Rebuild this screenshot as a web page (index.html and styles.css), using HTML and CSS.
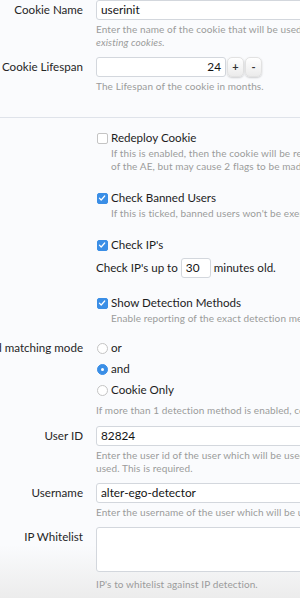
FILE: index.html
```html
<!DOCTYPE html>
<html lang="en">
<head>
<meta charset="utf-8">
<title>Alter Ego Detector options</title>
<link rel="stylesheet" href="styles.css">
</head>
<body>
<div class="form">
  <section class="group first">
    <div class="row text-row">
      <div class="label">Cookie Name</div>
      <div class="field">
        <div class="input wide">userinit</div>
        <p class="explain">Enter the name of the cookie that will be used to track users. Changing<br><i>existing cookies.</i></p>
      </div>
    </div>
    <div class="row text-row">
      <div class="label">Cookie Lifespan</div>
      <div class="field">
        <div class="spin">
          <div class="input num">24</div>
          <button class="spin-btn">+</button>
          <button class="spin-btn">-</button>
        </div>
        <p class="explain">The Lifespan of the cookie in months.</p>
      </div>
    </div>
  </section>

  <section class="group second">
    <div class="row">
      <div class="label"></div>
      <div class="field checks">
        <div class="check-item">
          <label class="check"><span class="box"></span>Redeploy Cookie</label>
          <p class="explain sub">If this is enabled, then the cookie will be reset on every page view, improving the detection<br>of the AE, but may cause 2 flags to be made for the same user pair.</p>
        </div>
        <div class="check-item">
          <label class="check"><span class="box on"><svg viewBox="0 0 10 10" width="10" height="10"><path d="M2.4 5.2 L4.2 7 L7.7 3" fill="none" stroke="#fff" stroke-width="1.2" stroke-linecap="round" stroke-linejoin="round"/></svg></span>Check Banned Users</label>
          <p class="explain sub">If this is ticked, banned users won't be exempt from detection.</p>
        </div>
        <div class="check-item">
          <label class="check"><span class="box on"><svg viewBox="0 0 10 10" width="10" height="10"><path d="M2.4 5.2 L4.2 7 L7.7 3" fill="none" stroke="#fff" stroke-width="1.2" stroke-linecap="round" stroke-linejoin="round"/></svg></span>Check IP's</label>
          <div class="inline-line">Check IP's up to <span class="input mini">30</span> minutes old.</div>
        </div>
        <div class="check-item">
          <label class="check"><span class="box on"><svg viewBox="0 0 10 10" width="10" height="10"><path d="M2.4 5.2 L4.2 7 L7.7 3" fill="none" stroke="#fff" stroke-width="1.2" stroke-linecap="round" stroke-linejoin="round"/></svg></span>Show Detection Methods</label>
          <p class="explain sub">Enable reporting of the exact detection methods used in the report.</p>
        </div>
      </div>
    </div>

    <div class="row radio-row">
      <div class="label">Detection method matching mode</div>
      <div class="field">
        <div class="radios">
          <label class="radio"><span class="dot"></span>or</label>
          <label class="radio"><span class="dot on"></span>and</label>
          <label class="radio"><span class="dot"></span>Cookie Only</label>
        </div>
        <p class="explain">If more than 1 detection method is enabled, configure how they are matched.</p>
      </div>
    </div>

    <div class="row text-row">
      <div class="label">User ID</div>
      <div class="field">
        <div class="input wide">82824</div>
        <p class="explain">Enter the user id of the user which will be used to create the reports. The user must be<br>used. This is required.</p>
      </div>
    </div>
    <div class="row text-row">
      <div class="label">Username</div>
      <div class="field">
        <div class="input wide">alter-ego-detector</div>
        <p class="explain">Enter the username of the user which will be used to create the reports.</p>
      </div>
    </div>
    <div class="row text-row">
      <div class="label">IP Whitelist</div>
      <div class="field">
        <div class="textarea"></div>
        <p class="explain gap">IP's to whitelist against IP detection.</p>
      </div>
    </div>
  </section>
</div>
</body>
</html>
```

FILE: styles.css
```css
html, body {
  margin: 0;
  padding: 0;
  overflow: hidden;
}
body {
  width: 300px;
  height: 598px;
  background: linear-gradient(to bottom, #fafbfd 0, #fafbfd 545px, #ececec 598px);
  font-family: Lato, "Open Sans", sans-serif;
  color: #1d1d1d;
}
.form {
  width: 560px;
}
.group.first {
  padding-bottom: 24px;
  border-bottom: 1px solid #dfe3ea;
}
.group.second {
  padding-top: 12px;
}
.row {
  display: grid;
  grid-template-columns: 83px 1fr;
  column-gap: 13px;
}
.text-row + .text-row {
  margin-top: 8px;
}
.label {
  font-size: 11.6px;
  line-height: 20px;
  text-align: right;
  white-space: nowrap;
  direction: rtl;
  color: #262626;
}
.field {
  min-width: 0;
}
.input {
  box-sizing: border-box;
  height: 20px;
  border: 1px solid #d3d7dd;
  border-radius: 3px;
  background: #fff;
  font-size: 11.8px;
  line-height: 18px;
  padding: 0 4px;
  color: #141414;
}
.input.wide {
  width: 420px;
}
.explain {
  margin: 3px 0 0;
  font-size: 10px;
  line-height: 13px;
  letter-spacing: 0.1px;
  color: #9b9b9b;
  white-space: nowrap;
}
.explain.gap {
  margin-top: 6px;
}
.spin {
  display: flex;
  align-items: center;
  gap: 1px;
}
.input.num {
  width: 130px;
  text-align: right;
}
.spin-btn {
  width: 17px;
  height: 20px;
  padding: 0;
  border: 1px solid #e2e2e2;
  border-radius: 5px;
  background: linear-gradient(#ffffff, #ebebeb);
  box-shadow: 0 1px 2px rgba(0, 0, 0, 0.18);
  font-family: Lato, sans-serif;
  font-weight: bold;
  font-size: 11px;
  color: #333;
  line-height: 18px;
}
.checks {
  display: flex;
  flex-direction: column;
  gap: 17px;
}
.check, .radio {
  display: flex;
  align-items: center;
  gap: 3px;
  font-size: 11.6px;
  line-height: 16px;
}
.box {
  box-sizing: border-box;
  width: 11px;
  height: 11px;
  margin-left: 1px;
  border: 1px solid #c4c4c4;
  border-radius: 2px;
  background: #fff;
  display: flex;
}
.box.on {
  background: #3a8ee6;
  border-color: #3a8ee6;
}
.box svg {
  margin: -1px;
}
.explain.sub {
  margin-top: 1px;
  padding-left: 15px;
}
.inline-line {
  margin-top: 5px;
  font-size: 11.6px;
  line-height: 20px;
  display: flex;
  align-items: center;
  gap: 3px;
  white-space: nowrap;
}
.input.mini {
  width: 30px;
  display: inline-block;
}
.radio-row {
  margin-top: 15px;
}
.radio-row .label {
  line-height: 16px;
}
.radios {
  display: flex;
  flex-direction: column;
  gap: 5px;
}
.dot {
  box-sizing: border-box;
  width: 11px;
  height: 11px;
  margin-left: 1px;
  border: 1px solid #c4c4c4;
  border-radius: 50%;
  background: #fff;
  position: relative;
}
.dot.on {
  background: #3a8ee6;
  border-color: #3a8ee6;
}
.dot.on::after {
  content: "";
  position: absolute;
  left: 3px;
  top: 3px;
  width: 3px;
  height: 3px;
  border-radius: 50%;
  background: #fff;
}
.radio-row .explain {
  margin-top: 6px;
}
.radio-row + .text-row {
  margin-top: 9px;
}
.textarea {
  box-sizing: border-box;
  width: 420px;
  height: 45px;
  border: 1px solid #d3d7dd;
  border-radius: 3px;
  background: #fff;
}
```
